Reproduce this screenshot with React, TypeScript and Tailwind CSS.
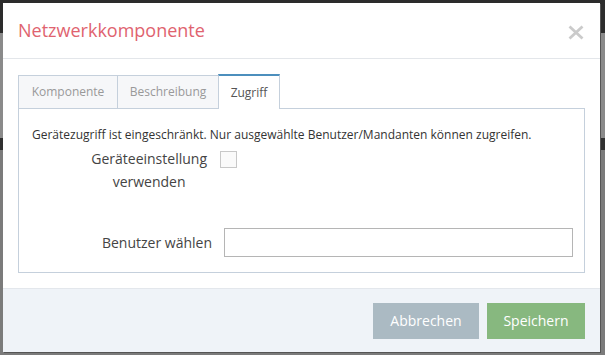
import React, { useState } from "react";

const tabs = [
  { name: "Komponente", w: "w-[99px]" },
  { name: "Beschreibung", w: "w-[101px]" },
  { name: "Zugriff", w: "w-[62px]" },
];

export default function App() {
  const [active, setActive] = useState("Zugriff");
  const [useDevice, setUseDevice] = useState(false);
  const [user, setUser] = useState("");

  return (
    <div
      className="relative h-[355px] w-[605px] overflow-hidden"
      style={{ fontFamily: '"Open Sans", "Noto Sans", sans-serif' }}
    >
      {/* page behind the dialog, dimmed */}
      <div className="flex h-full flex-col">
        <div className="h-[33px] bg-[#2c2c2c]" />
        <div className="h-[105px] bg-[#8a8a8a]" />
        <div className="h-[12px] bg-[#303030]" />
        <div className="flex-1 bg-[#7b7b7b]" />
      </div>

      <div className="absolute left-[3px] top-[3px] flex h-[349px] w-[597px] flex-col bg-white shadow-[1px_1px_0_#555]">
        <header className="flex h-[56px] items-center justify-between border-b border-[#e3e6ea] pl-[15px] pr-[16px]">
          <h2 className="text-[18px] text-[#e0636f]">Netzwerkkomponente</h2>
          <button className="mt-[4px] text-[#cbcbcb]">
            <svg width="16" height="15" viewBox="0 0 16 15">
              <path d="M1.5 1.5 L14.5 13.5 M14.5 1.5 L1.5 13.5" stroke="currentColor" strokeWidth="2.8" />
            </svg>
          </button>
        </header>

        <div className="flex-1 px-[15px] pt-[15px]">
          <div className="flex h-[34px] items-end">
            {tabs.map((t) => (
              <button
                key={t.name}
                onClick={() => setActive(t.name)}
                className={
                  t.name === active
                    ? `relative -mb-px h-[35px] ${t.w} border-x border-t-2 border-[#c5d0dc] border-t-[#4c8fbd] bg-white text-[12px] text-[#555]`
                    : `h-[33px] ${t.w} border-l border-t border-[#c5d0dc] bg-[#f6f7f9] text-[12px] text-[#999]`
                }
              >
                {t.name}
              </button>
            ))}
          </div>
          <div className="h-[165px] border border-[#c5d0dc] pl-[13px] pr-[11px] pt-[17px]">
            <p className="text-[12px] text-[#333]">
              Gerätezugriff ist eingeschränkt. Nur ausgewählte Benutzer/Mandanten können zugreifen.
            </p>
            <div className="mt-[3px] flex items-start">
              <div className="flex w-[175px] justify-end">
                <label className="text-center text-[14px] leading-[23px] text-[#444]">
                  Geräteeinstellung
                  <br />
                  verwenden
                </label>
              </div>
              <button
                onClick={() => setUseDevice(!useDevice)}
                className="ml-[13px] mt-[4px] h-[17px] w-[17px] border border-[#c8c8c8] bg-[#fafafa] text-[11px] leading-[14px] text-[#4c8fbd]"
              >
                {useDevice ? "✓" : ""}
              </button>
            </div>
            <div className="mt-[35px] flex items-center">
              <label className="w-[192px] shrink-0 pr-[12px] text-right text-[14px] text-[#444]">Benutzer wählen</label>
              <input
                value={user}
                onChange={(e) => setUser(e.target.value)}
                className="h-[29px] min-w-0 flex-1 border border-[#b5b5b5] px-2 text-[13px] outline-none"
              />
            </div>
          </div>
        </div>

        <footer className="flex h-[64px] items-center justify-end gap-[8px] border-t border-[#e3e7ec] bg-[#eff3f8] pr-[15px]">
          <button className="h-[36px] w-[106px] bg-[#abbac3] text-[14px] text-white">Abbrechen</button>
          <button className="h-[36px] w-[98px] bg-[#87b87f] text-[14px] text-white">Speichern</button>
        </footer>
      </div>
    </div>
  );
}
